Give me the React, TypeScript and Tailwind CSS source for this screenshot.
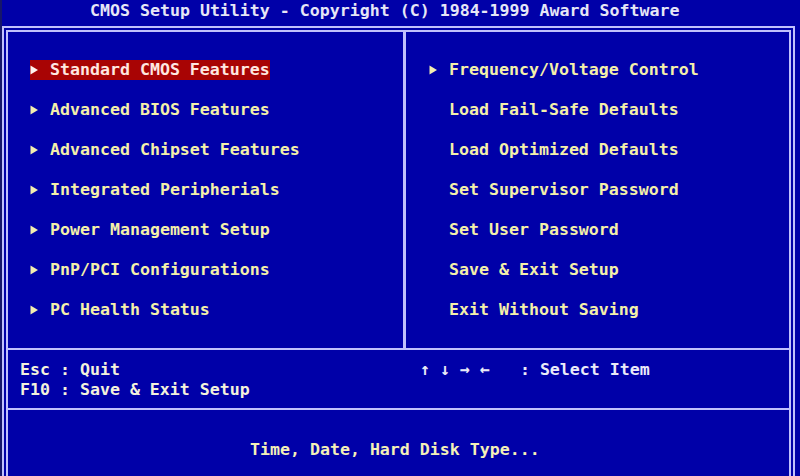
const LEFT_ITEMS = [
  'Standard CMOS Features',
  'Advanced BIOS Features',
  'Advanced Chipset Features',
  'Integrated Peripherials',
  'Power Management Setup',
  'PnP/PCI Configurations',
  'PC Health Status',
]

const RIGHT_ITEMS = [
  { label: 'Frequency/Voltage Control', sub: true },
  { label: 'Load Fail-Safe Defaults', sub: false },
  { label: 'Load Optimized Defaults', sub: false },
  { label: 'Set Supervisor Password', sub: false },
  { label: 'Set User Password', sub: false },
  { label: 'Save & Exit Setup', sub: false },
  { label: 'Exit Without Saving', sub: false },
]

function Pointer({ show, light }: { show: boolean; light?: boolean }) {
  return (
    <span className="w-[20px] h-[20px] shrink-0">
      {show && (
        <svg width="10" height="20" viewBox="0 0 10 20">
          <polygon points="0.5,5.5 8,10 0.5,14.5" fill={light ? '#fff4ee' : '#f2eeb0'} />
        </svg>
      )}
    </span>
  )
}

function MenuRow({ label, sub, active }: { label: string; sub: boolean; active?: boolean }) {
  return (
    <div className="flex h-[20px]">
      <div className={`flex items-center ${active ? 'bg-[#a80404] text-[#ffe8e0]' : 'text-[#f4f0aa]'}`}>
        <Pointer show={sub} light={active} />
        <span className="whitespace-pre">{label}</span>
      </div>
    </div>
  )
}

export default function App() {
  return (
    <div className="w-[800px] h-[476px] overflow-hidden bg-[#0000a8] border-l-2 border-[#16166a] flex flex-col [font-family:'DejaVu_Sans_Mono',monospace] font-bold text-[16.6px] leading-[20px]">
      {/* title */}
      <div className="pt-[1px] pl-[88px] h-[26px] text-[#e6e6f6] whitespace-pre">
        CMOS Setup Utility - Copyright (C) 1984-1999 Award Software
      </div>

      {/* frame */}
      <div className="flex-1 mr-[5px] border-[6px] border-b-0 border-double border-[#c0c0fc] flex flex-col">
        {/* menus */}
        <div className="h-[316px] flex">
          <div className="w-[398px] border-r-[3px] border-[#c0c0fc] pt-[28px] pl-[22px] flex flex-col gap-[20px]">
            {LEFT_ITEMS.map((item, i) => (
              <MenuRow key={item} label={item} sub active={i === 0} />
            ))}
          </div>
          <div className="flex-1 pt-[28px] pl-[23px] flex flex-col gap-[20px]">
            {RIGHT_ITEMS.map((item) => (
              <MenuRow key={item.label} label={item.label} sub={item.sub} />
            ))}
          </div>
        </div>

        {/* key help */}
        <div className="h-[60px] border-t-2 border-[#c0c0fc] pt-[10px] flex">
          <div className="w-[412px] pl-[12px] text-[#f4f2dc] whitespace-pre">
            <div>Esc : Quit</div>
            <div>F10 : Save &amp; Exit Setup</div>
          </div>
          <div className="text-[#eaeaf8] whitespace-pre">↑ ↓ → ←   : Select Item</div>
        </div>

        {/* description */}
        <div className="flex-1 border-t-2 border-[#c0c0fc] pt-[30px] pl-[242px] text-[#f4f0b8] whitespace-pre">
          Time, Date, Hard Disk Type...
        </div>
      </div>
    </div>
  )
}
